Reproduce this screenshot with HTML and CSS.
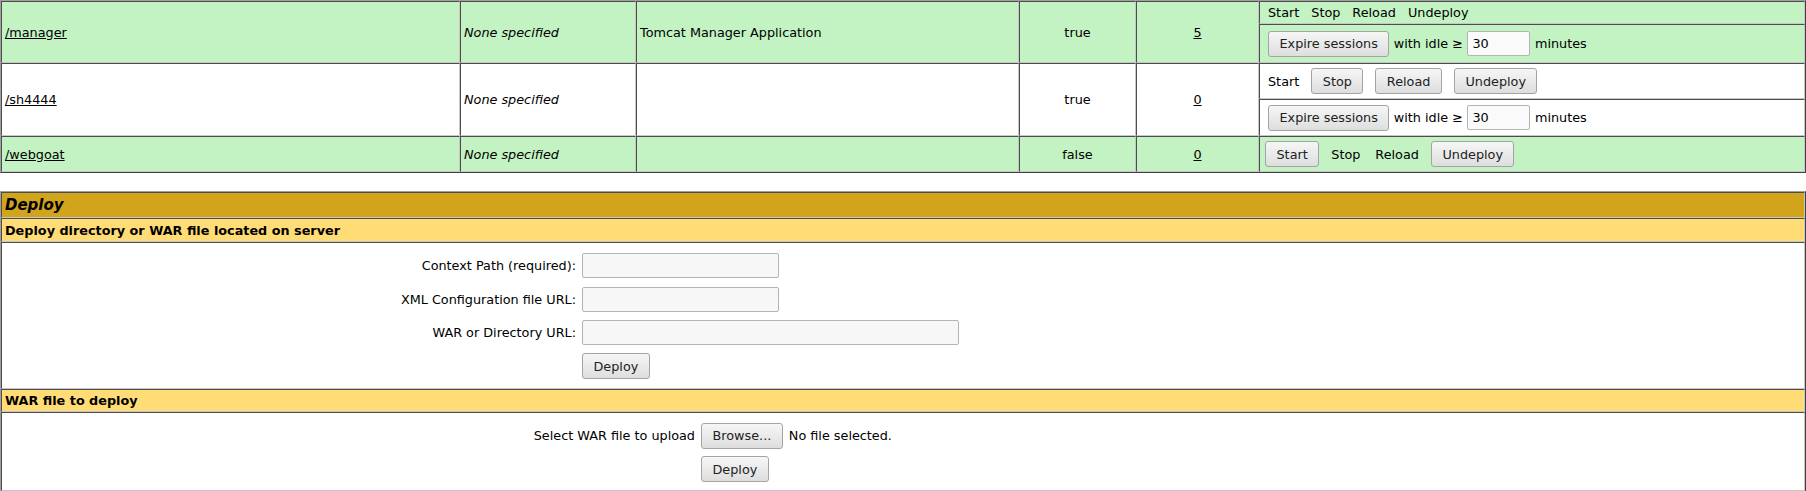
FILE: index.html
```html
<!DOCTYPE html>
<html>
<head>
<meta charset="utf-8">
<title>Tomcat Web Application Manager</title>
<link rel="stylesheet" href="styles.css">
</head>
<body>
<table class="apps">
  <colgroup>
    <col class="c-path"><col class="c-ver"><col class="c-name"><col class="c-run"><col class="c-sess"><col class="c-cmd">
  </colgroup>
  <tbody>
    <tr class="r-text hl">
      <td rowspan="2"><a href="#">/manager</a></td>
      <td rowspan="2"><i>None specified</i></td>
      <td rowspan="2">Tomcat Manager Application</td>
      <td rowspan="2" class="center">true</td>
      <td rowspan="2" class="center"><a href="#">5</a></td>
      <td><div class="cmds"><span>Start</span><span>Stop</span><span>Reload</span><span>Undeploy</span></div></td>
    </tr>
    <tr class="r-exp1 hl">
      <td><div class="expire"><button type="button" class="btn">Expire sessions</button><span>with idle &ge;</span><input class="idle" type="text" value="30"><span>minutes</span></div></td>
    </tr>
    <tr class="r-btn">
      <td rowspan="2"><a href="#">/sh4444</a></td>
      <td rowspan="2"><i>None specified</i></td>
      <td rowspan="2"></td>
      <td rowspan="2" class="center">true</td>
      <td rowspan="2" class="center"><a href="#">0</a></td>
      <td><div class="cmds"><span>Start</span><button type="button" class="btn">Stop</button><button type="button" class="btn">Reload</button><button type="button" class="btn">Undeploy</button></div></td>
    </tr>
    <tr class="r-exp2">
      <td><div class="expire"><button type="button" class="btn">Expire sessions</button><span>with idle &ge;</span><input class="idle" type="text" value="30"><span>minutes</span></div></td>
    </tr>
    <tr class="r-last hl">
      <td><a href="#">/webgoat</a></td>
      <td><i>None specified</i></td>
      <td></td>
      <td class="center">false</td>
      <td class="center"><a href="#">0</a></td>
      <td><div class="cmds tight"><button type="button" class="btn">Start</button><span>Stop</span><span class="wide">Reload</span><button type="button" class="btn">Undeploy</button></div></td>
    </tr>
  </tbody>
</table>

<table class="deploy">
  <tbody>
    <tr class="d-title"><td class="title">Deploy</td></tr>
    <tr class="d-head"><td class="header">Deploy directory or WAR file located on server</td></tr>
    <tr class="d-server">
      <td>
        <form class="form-grid server-grid">
          <label class="lbl">Context Path (required):</label><input class="txt short" type="text">
          <label class="lbl">XML Configuration file URL:</label><input class="txt short" type="text">
          <label class="lbl">WAR or Directory URL:</label><input class="txt long" type="text">
          <span class="lbl"></span><button type="button" class="btn">Deploy</button>
        </form>
      </td>
    </tr>
    <tr class="d-head2"><td class="header">WAR file to deploy</td></tr>
    <tr class="d-war">
      <td>
        <form class="form-grid war-grid">
          <label class="lbl">Select WAR file to upload</label>
          <div class="file"><button type="button" class="btn">Browse...</button><span>No file selected.</span></div>
          <span class="lbl"></span><button type="button" class="btn">Deploy</button>
        </form>
      </td>
    </tr>
  </tbody>
</table>
</body>
</html>
```

FILE: styles.css
```css
body {
  margin: 0;
  font-family: "DejaVu Sans", "Liberation Sans", sans-serif;
  font-size: 15px;
  color: #000;
  background: #fff;
}

table.apps,
table.deploy {
  width: 100%;
  table-layout: fixed;
  border-collapse: separate;
  border-spacing: 0;
  border: 1px solid;
  border-color: #a0a0a0 #404040 #404040 #a0a0a0;
}

.apps td,
.deploy td {
  border: 1px solid;
  border-color: #4d4d4d #c6c6c6 #c6c6c6 #4d4d4d;
  padding: 3px;
  font-size: 12.8px;
  text-align: left;
  vertical-align: middle;
  background: #fff;
}

.c-path { width: 459px; }
.c-ver { width: 176px; }
.c-name { width: 383px; }
.c-run { width: 117px; }
.c-sess { width: 123px; }

.apps tr.hl td { background: #c3f3c3; }
.apps td.center { text-align: center; }

.r-text { height: 23px; }
.r-exp1 { height: 39px; }
.r-btn { height: 36px; }
.r-exp2 { height: 37px; }
.r-last { height: 36px; }

a {
  color: #000;
  text-decoration: underline;
}

.cmds {
  display: flex;
  align-items: center;
  gap: 12px;
  padding-left: 5px;
}
.cmds.tight { padding-left: 2px; }
.cmds .wide { margin-left: 3px; }

.expire {
  display: flex;
  align-items: center;
  gap: 4.5px;
  padding-left: 5px;
}

.btn {
  box-sizing: border-box;
  height: 26px;
  padding: 0 10.5px;
  font-family: "DejaVu Sans", "Liberation Sans", sans-serif;
  font-size: 12.8px;
  color: #222;
  background: linear-gradient(#f6f6f6, #dedede);
  border: 1px solid #a4a4a4;
  border-radius: 3px;
  margin: 0;
}

input.idle,
input.txt {
  box-sizing: border-box;
  height: 25px;
  margin: 0;
  padding: 0 4px;
  font-family: "DejaVu Sans", "Liberation Sans", sans-serif;
  font-size: 12.8px;
  color: #000;
  background: #f7f7f7;
  border: 1px solid #b4b4b4;
  border-radius: 2px;
}
input.idle { width: 63px; background: #fafafa; }
input.short { width: 197px; }
input.long { width: 377px; }

.deploy { margin-top: 18px; }

.deploy td.title {
  background: #d2a41c;
  font-size: 15px;
  font-weight: bold;
  font-style: italic;
}
.deploy td.header {
  background: #ffdc75;
  font-weight: bold;
}
.d-title { height: 25px; }
.d-head { height: 24px; }
.d-head2 { height: 23px; }
.d-server { height: 147px; }
.d-war { height: 79px; }

.form-grid {
  display: grid;
  column-gap: 6px;
  grid-auto-rows: 33.5px;
  align-items: center;
  justify-items: start;
  margin: 0;
}
.server-grid {
  grid-template-columns: 571px auto;
  padding: 3px 0 2px;
}
.war-grid {
  grid-template-columns: 690px auto;
  padding: 3px 0 1px;
}
.lbl {
  justify-self: end;
}

.file {
  display: flex;
  align-items: center;
  gap: 6px;
}
```
